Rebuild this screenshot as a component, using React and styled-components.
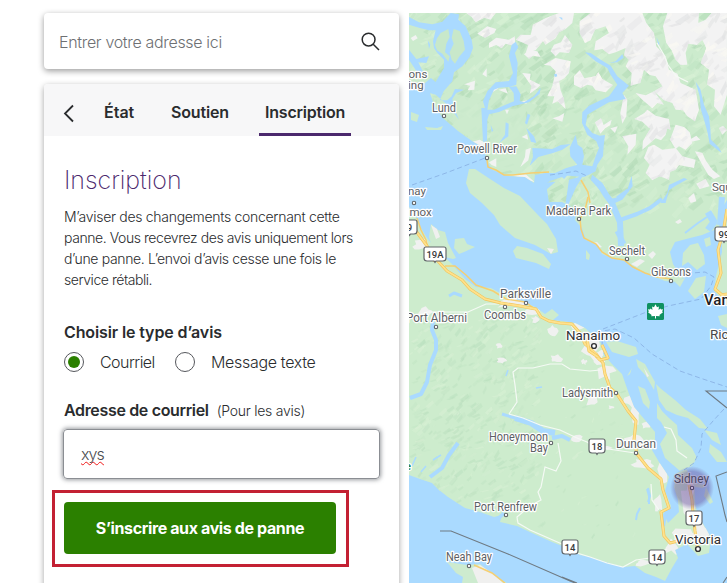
import styled, { createGlobalStyle } from "styled-components";

const GlobalStyle = createGlobalStyle`
  * {
    box-sizing: border-box;
  }
  body {
    margin: 0;
    overflow: hidden;
    background-color: white;
    font-family: Inter, "Liberation Sans", sans-serif;
    color: #2a2c2e;
  }
`;

const Page = styled.div`
  height: 583px;
  padding: 13px 0 0 44px;
  display: flex;
  gap: 10px;
  overflow: hidden;
`;

const Sidebar = styled.div`
  width: 355px;
  flex-shrink: 0;
  display: flex;
  flex-direction: column;
  gap: 15px;
`;

const SearchBox = styled.div`
  height: 56px;
  flex-shrink: 0;
  padding: 0 19px 0 15px;
  display: flex;
  align-items: center;
  justify-content: space-between;
  border-radius: 4px;
  background-color: white;
  box-shadow: 0 2px 6px rgba(0, 0, 0, 0.4);
`;

const Placeholder = styled.span`
  font-size: 16px;
  font-weight: 300;
  line-height: 20px;
  letter-spacing: -0.33px;
  padding-top: 2px;
  color: #6e7073;
`;

const Panel = styled.div`
  height: 530px;
  flex-shrink: 0;
  border-radius: 4px;
  background-color: white;
  box-shadow: 0 2px 6px rgba(0, 0, 0, 0.36);
`;

const Tabs = styled.div`
  height: 52px;
  padding-left: 19px;
  display: flex;
  background-color: #f7f7f8;
  border-radius: 4px 4px 0 0;
`;

const Back = styled.div`
  width: 35px;
  padding-top: 20px;
`;

const Tab = styled.div`
  width: ${(props) => props.$width}px;
  margin-right: ${(props) => props.$gap || 0}px;
  padding: 18px 0 0 6px;
  font-size: 16px;
  font-weight: 600;
  line-height: 20px;
  letter-spacing: ${(props) => props.$spacing}px;
  white-space: nowrap;
  border-bottom: 3px solid ${(props) => (props.$active ? "#4b286d" : "transparent")};
`;

const Body = styled.div`
  padding: 28px 19px 0 20px;
`;

const Title = styled.h1`
  margin: 0;
  font-size: 25px;
  font-weight: 250;
  line-height: 32px;
  letter-spacing: -0.05px;
  color: #4b286d;
`;

const Intro = styled.p`
  margin: 10px 0 0;
  font-size: 14px;
  font-weight: 300;
  line-height: 21px;
  white-space: nowrap;
`;

const Line = styled.span`
  display: block;
  letter-spacing: ${(props) => props.$spacing}px;
`;

const Label = styled.div`
  margin-top: ${(props) => props.$top}px;
  display: flex;
  align-items: baseline;
  gap: 8px;
  font-size: 16px;
  font-weight: 600;
  line-height: 24px;
  letter-spacing: ${(props) => props.$spacing}px;
  white-space: nowrap;
`;

const Hint = styled.span`
  font-size: 14px;
  font-weight: 300;
  letter-spacing: -0.26px;
`;

const Radios = styled.div`
  margin-top: 6px;
  height: 24px;
  display: flex;
  align-items: center;
`;

const Radio = styled.div`
  width: 20px;
  height: 20px;
  margin-right: 16px;
  display: flex;
  align-items: center;
  justify-content: center;
  border: 1px solid #55575c;
  border-radius: 50%;
`;

const Dot = styled.div`
  width: 12px;
  height: 12px;
  border-radius: 50%;
  background-color: #2b8000;
`;

const Option = styled.span`
  width: ${(props) => props.$width}px;
  font-size: 16px;
  font-weight: 300;
  letter-spacing: ${(props) => props.$spacing}px;
  white-space: nowrap;
`;

const Field = styled.div`
  height: 50px;
  margin: 6px 0 0 -1px;
  padding: 0 17px;
  display: flex;
  align-items: center;
  border: 1px solid #8b8e93;
  border-radius: 4px;
  box-shadow: 0 0 4px 1px rgba(84, 89, 95, 0.6);
`;

const Typed = styled.span`
  font-size: 16px;
  font-weight: 300;
  line-height: 20px;
  letter-spacing: -0.9px;
  color: #4b4d50;
  text-decoration: underline wavy #f01818 1px;
  text-underline-offset: 1px;
  text-decoration-skip-ink: none;
`;

const Highlight = styled.div`
  width: 297px;
  margin: 11px 0 0 -12px;
  padding: 9px 10px 10px 9px;
  border: 3px solid #c32033;
`;

const Button = styled.button`
  display: block;
  width: 272px;
  height: 52px;
  padding: 0;
  border: none;
  border-radius: 4px;
  background-color: #2b8000;
  color: white;
  font-family: inherit;
  font-size: 16px;
  font-weight: 700;
  letter-spacing: -0.38px;
  white-space: nowrap;
`;

const MapFrame = styled.div`
  width: 318px;
  height: 570px;
  flex-shrink: 0;
  overflow: hidden;
  svg {
    display: block;
  }
  text {
    font-family: Roboto, "Liberation Sans", sans-serif;
  }
`;

const MAINLAND =
  "M409 13H727V200L722 208 719 228 702 235 690 238 675 242 670 252 673 264 678 272 684 277 678 282 665 281 650 275 640 270 634 267 627 261 615 259 602 254 598 245 586 240 582 228 575 220 577 212 570 206 562 202 549 202 546 184 550 181 565 176 558 173 545 173 535 175 534 183 525 177 508 176 493 170 487 162 484 148 472 141 458 131 443 118 434 105 430 93 438 93 438 84 431 78 425 83 415 86 409 80Z";

const ISLAND =
  "M409 207L415 215 419 225 427 238 438 251 452 264 465 279 476 287 491 288 502 294 518 300 535 307 545 314 552 309 559 315 553 320 562 321 575 323 585 328 592 334 604 346 603 354 612 364 622 374 629 394 634 407 645 420 655 432 655 440 652 450 659 462 669 477 665 491 671 506 665 516 668 523 679 512 678 500 674 487 677 473 686 469 694 480 695 502 697 513 705 527 711 538 709 553 698 556 687 544 675 550 678 558 672 568 665 581 656 577 645 573 635 566 624 567 612 564 590 557 580 555 570 549 552 542 532 533 517 526 500 522 502 515 494 517 480 512 465 508 448 497 439 490 432 483 420 479 409 475Z";

const ISLES = [
  "M469 169L475 169 487 177 504 188 520 196 538 215 547 224 556 239 558 252 551 254 535 245 515 238 500 225 494 215 482 203 470 193 466 183Z",
  "M517 246L527 248 543 254 551 264 549 269 536 263 516 258 513 251Z",
  "M431 224L438 230 445 232 448 243 456 258 453 259 441 256 432 247 429 237Z",
  "M455 239L464 238 467 244 475 247 464 252 459 254 454 248Z",
  "M411 112L419 115 417 122 411 120Z",
  "M425 127L437 128 443 126 441 130 427 130Z",
  "M683 253L690 245 698 243 704 255 705 264 697 270 688 262 682 266Z",
  "M688 291L696 278 706 276 704 292 695 299Z",
  "M704 239L710 237 711 245 706 247Z",
  "M675 282L685 278 680 287Z",
  "M586 250L590 255 589 260 586 259Z",
  "M727 220L722 233 722 252 716 276 714 291 720 297 727 298Z",
  "M718 316L727 314V328L721 325Z",
  "M606 342L617 341 636 347 638 354 629 357 612 352Z",
  "M636 359L645 364 655 382 654 390 646 376 638 367Z",
  "M638 386L645 389 650 402 649 409 643 403Z",
  "M657 403L662 411 669 418 677 425 678 435 692 448 697 458 692 466 680 471 665 458 660 444 667 433 661 422 657 418Z",
  "M656 384L660 388 675 400 686 410 700 419 708 429 699 428 688 418 677 415 666 410 659 400Z",
  "M704 430L717 433 721 445 712 440Z",
  "M710 444L721 452 727 462 717 462 709 452Z",
  "M706 487L713 502 710 504 704 496Z",
  "M693 483L706 485 703 488 695 487Z",
  "M447 562L467 565 480 564 495 577 507 583H462L463 577 456 573Z",
  "M632 368L630 374 627 376Z",
];

// sounds, inlets and lakes of the northern half, on a grid three times as fine
const NORTH_WATER = [
  "M0 12L30 28 70 34 100 26 125 0 150 4 148 20 170 40 188 80 192 105 182 132 160 160 135 178 130 205 104 235 92 262 115 262 128 250 138 228 165 230 142 240 130 258 135 285 150 320 120 280 80 245 62 240 75 215 90 190 105 165 105 140 85 120 75 105 72 85 80 52 60 52 30 44 0 35Z",
  "M0 110L22 138 60 130 52 150 28 148 45 182 22 174 0 140Z",
  "M56 82L64 95 60 108Z",
  "M308 96L320 86 328 102 318 120 326 150 322 215 300 222 270 224 255 230 240 262 235 290 255 290 290 275 315 265 314 240 300 222 322 220 335 244 332 264 345 268 375 250 395 225 392 242 360 268 310 280 270 297 240 304 235 320 234 384 222 386 217 285 228 285 222 265 235 235 260 208 300 204 312 180 300 130Z",
  "M290 328L299 332 298 370 270 390 288 365Z",
  "M245 335l8 18-5 4z",
  "M356 302L364 306 354 335 348 330Z M352 345L375 370 382 390 366 386Z",
  "M370 405L430 408 455 396 485 393 460 410 432 420 418 424 388 432 362 458 372 432Z",
  "M528 118L545 120 575 140 605 158 625 190 660 218 640 240 650 258 600 268 560 290 535 305 530 336 550 360 572 368 588 366 584 400 582 430 565 455 560 475 540 485 525 492 480 488 425 486 470 466 505 455 484 430 482 404 500 366 506 395 520 405 525 430 520 455 550 460 560 430 570 405 562 385 535 365 519 330 520 298 540 278 600 250 625 215 605 185 595 165 560 145Z",
  "M600 150L620 145 640 124 644 134 625 148Z",
  "M550 485L580 510 605 558 630 552 656 528 668 488 671 520 640 560 618 570H598L580 540 545 500Z",
  "M780 516L825 495 835 499 800 518 780 532 770 570H755L775 540Z",
  "M742 72L752 94 748 96Z",
  "M860 206L874 228 885 275 900 310 904 345 906 380 930 404 938 420 902 392 896 360 888 330 876 290 872 250Z",
  "M435 184l8-2 2 8-7 2z M450 12l10 2 0 8z",
  "M480 500L520 490 495 530 478 570H470Z",
  "M400 510L440 506 412 530 400 525Z",
];

const NORTH_ISLES = [
  "M95 60L118 48 122 72 112 92 108 118 122 130 118 146 100 122 84 112 78 96 84 76Z",
  "M134 48L152 54 164 84 168 110 150 132 138 152 128 140 122 118 134 92 128 74Z",
  "M530 404L545 410 538 424 526 416Z",
];

const SNOW = [
  "M172 0L260 0 245 20 226 14 200 28 188 12Z",
  "M205 62L235 40 262 48 256 60 228 74Z",
  "M240 90L262 74 300 80 318 70 318 100 290 92 278 106 262 96 240 104Z",
  "M320 80L335 65 365 66 372 35 410 15 450 0 495 0 490 30 470 48 450 58 440 76 410 95 402 84 380 112 350 120 358 96Z",
  "M435 95L456 88 468 66 490 95 480 120 452 118 440 130 425 115Z",
  "M345 124L360 112 385 115 395 132 372 128 360 137Z",
  "M405 155L440 135 485 145 480 180 466 196 450 205 455 232 464 256 470 288 446 265 430 272 436 250 415 250 430 220 440 175 424 158Z",
  "M340 180L365 182 362 200 395 216 382 228 362 242 368 220Z",
  "M495 190L512 172 526 196 560 190 568 178 580 198 612 216 590 238 560 232 550 218 535 215 515 225 495 215Z",
  "M512 25L545 0 700 0 712 30 735 60 742 100 770 130 780 170 805 182 815 210 860 230 870 290 858 325 835 310 822 292 800 290 790 270 765 262 735 235 760 220 740 190 722 186 705 170 694 210 665 218 668 180 650 160 660 140 645 126 650 105 620 118 600 124 580 108 556 112 560 85 600 60 590 40 558 50 545 82 528 90 512 60Z",
  "M775 0L870 0 868 30 890 20 908 0 954 0 954 245 935 305 915 280 918 230 895 215 900 170 875 150 892 106 880 80 864 96 838 92 830 120 835 155 815 156 800 140 788 112 772 90 762 40Z",
  "M680 240L710 247 735 235 765 275 745 270 730 286 700 260Z",
  "M676 318L706 300 715 290 740 308 780 318 785 350 752 338 742 352 720 345 700 326Z",
  "M716 360L735 330 775 345 770 366 756 382 740 376 700 410 702 384Z",
  "M783 380L800 335 825 342 842 358 850 390 830 410 810 400 800 408Z",
  "M705 435L718 402 735 395 760 410 800 405 820 430 860 440 855 465 810 456 800 470 784 476 780 500 752 490 730 502 710 480 722 455Z",
  "M640 370L682 362 680 395 655 425 658 400Z",
  "M558 328L576 316 584 336 608 320 604 336 588 346 574 362Z",
  "M645 245L655 260 652 310 640 332 634 300Z",
  "M858 415L880 420 890 442 910 470 934 490 915 498 898 486 880 455Z",
  "M862 512L890 498 902 520 872 528Z",
  "M838 555L855 540 862 565 845 570Z",
  "M930 345L942 338 954 352 940 365Z",
  "M832 386L862 368 874 380 848 386Z",
  "M704 38L714 32 718 50Z",
  "M450 310L466 300 460 326 430 316Z",
];

const NORTH_TOWNS = [
  "M165 214L198 203 196 230 176 232 184 218Z", "M220 184L233 166 233 192Z", "M268 230L290 226 297 242Z",
  "M190 386L212 380 234 392 218 400Z", "M240 448L262 436 262 462 248 456Z", "M338 372L354 364 358 380Z",
  "M366 404L358 442 334 462 348 432 350 410Z", "M300 486L350 484 378 508 336 494Z", "M288 290L300 290 294 304Z",
  "M248 224L280 205 266 228 250 238Z", "M5 75L20 66 26 76 12 84Z", "M6 260L18 268 16 276Z",
  "M336 266L356 262 352 272Z", "M604 346L626 340 618 360Z", "M178 466L198 470 198 484 176 480Z",
];

// inlets and lakes drawn as strokes: [path, width]
const INLETS = [
  ["M563 178L570 170M567 204L575 186 581 176", 3],
  ["M600 185L606 195 612 203 620 222 621 246", 6],
  ["M617 198L628 190", 3],
  ["M620 220L637 214 650 208 662 199", 4],
  ["M624 244L617 231", 5],
  ["M708 212L714 222 708 230", 7],
  ["M722 197L720 225", 6],
  ["M685 233L698 223 707 217", 2],
  ["M433 322L432 330 436 340 436 350 430 365 427 382 421 394 410 398", 4],
  ["M449 296L454 293 462 296", 3],
  ["M458 443L449 455 442 468 430 477", 4],
  ["M416 457L412 466M421 472L426 466M433 460L441 455", 1.5],
  ["M502 414L515 418", 3],
  ["M515 418L531 423 543 431 555 433", 6],
  ["M552 438L562 436 570 440", 4],
  ["M497 520L504 513", 3.5],
  ["M648 488L650 496 648 502", 2],
  ["M640 508L637 514 636 520", 2],
  ["M647 489L649 496 649 504", 2],
  ["M670 507L665 515 663 526", 4],
  ["M506 376L508 370M536 388L542 387", 1.5],
];

// built-up ground along the coast and the highways: [x, y, rx, ry]
const TOWNS = [
  [414, 208, 6, 9], [420, 245, 8, 6], [436, 254, 9, 5], [427, 312, 8, 5], [512, 303, 19, 5],
  [533, 312, 10, 4], [553, 331, 5, 6], [536, 319, 5, 4], [501, 361, 5, 3], [555, 359, 7, 5],
  [591, 346, 9, 16], [606, 371, 9, 9], [598, 357, 8, 8], [578, 325, 7, 4], [636, 440, 12, 6],
  [643, 463, 11, 5], [662, 473, 5, 14], [658, 504, 5, 11], [689, 497, 7, 18], [699, 533, 12, 19],
  [686, 535, 15, 8], [672, 546, 8, 8], [592, 398, 7, 8], [636, 415, 5, 9], [577, 439, 6, 4],
  [642, 563, 8, 3], [499, 346, 3, 3], [483, 577, 13, 8], [611, 407, 3, 2], [630, 400, 6, 8],
  [604, 448, 8, 2], [646, 425, 5, 5], [584, 362, 3, 3],
];

const HIGHWAYS = [
  "M416 231L427 246 435 258 447 271 462 280 470 289 485 299 501 303 520 306 536 309 541 317 549 321 560 323 572 324 580 333 585 344 596 354 603 363 605 374 610 388 617 394 628 411 636 421 634 440 637 454 648 468 661 479 663 490 669 508 661 512 664 536 670 543 682 540",
  "M689 485L692 500 693 514 695 531 698 552",
  "M602 345L608 358 600 360 596 356",
  "M727 209L723 233 718 250 721 273 715 289 722 295 727 294",
  "M587 338L589 351 598 357",
];

const THIN_ROADS = [
  "M417 218L421 230 426 240 429 252 434 262M445 266L455 266 466 275 476 285 493 291 506 299 525 302 535 309",
  "M487 160L488 167 496 170 504 175 513 175 531 173 549 172",
  "M581 180L588 192 590 203",
  "M588 197L585 210 580 219 581 229 584 238 596 244 602 252 612 258 624 260 633 267 645 273 657 277 671 279",
  "M474 565L492 573 505 583",
];

const WHITE_ROADS = [
  "M409 319L427 312 448 312 468 312 486 304 499 304",
  "M509 414L517 402 515 385 513 372 518 368 533 368 550 364 562 364 570 369 590 371 600 370",
  "M509 414L523 418 540 425 560 430 577 438",
  "M558 443L561 461 556 471 545 467 541 487 538 492 541 500 530 506 517 517 518 523 530 530 562 544",
  "M577 438L587 442 595 447 615 450 635 453",
  "M577 553L590 557 607 563 623 567 636 560 650 558 667 549",
  "M657 43L664 55 668 65 676 76 688 82",
  "M664 427L671 429 676 440 677 451 687 458",
  "M651 484L652 500 659 510",
];

const FERRIES = [
  "M412 185L446 173 485 158",
  "M550 175L565 173 576 171 587 176",
  "M603 329L644 313 668 306 701 299 711 286 714 277 705 272 692 273",
  "M602 345L603 331 615 329 634 338 652 354 680 371 700 378 727 387",
  "M724 409L713 421 702 434 701 448 694 463 684 470",
];

// [x, y, width, text, size, colour]
const PLACES = [
  [432, 112, 24, "Lund"], [457, 153, 60, "Powell River"], [546, 215, 65, "Madeira Park"],
  [609, 255, 36, "Sechelt"], [651, 276, 40, "Gibsons"], [500, 298, 51, "Parksville"],
  [484, 319, 42, "Coombs"], [406, 322, 61, "Port Alberni"], [562, 397, 51, "Ladysmith"],
  [489, 441, 59, "Honeymoon"], [530, 452, 18, "Bay"], [616, 448, 40, "Duncan"],
  [474, 511, 63, "Port Renfrew"], [446, 561, 46, "Neah Bay"],
  [566, 340, 54, "Nanaimo", 13.5, "#303134"], [675, 544, 46, "Victoria", 13.5, "#303134"],
];

// names that run off the edge of the map: [x, y, text, size, colour, weight]
const EDGE_PLACES = [
  [408.5, 78, "ons", 11.5], [408, 89, "ing", 11.5], [408, 195, "nay", 11.5], [409.5, 216, "mox", 11.5],
  [712, 191, "Squ", 11.5], [710, 339, "Ric", 13.5, "#45484c"], [704, 305, "Van", 15, "#202124", 500],
];

const STOPS = [
  [444, 116], [487, 158], [414, 203], [579, 219], [627, 259], [671, 281], [526, 303],
  [505, 307], [436, 327], [616, 393], [551, 443], [636, 453], [506, 515], [469, 566],
];

const SHIELDS = [
  [424, 247, 22, "19A"], [589, 439, 16, "18"], [686, 511, 16, "17"], [562, 540, 16, "14"],
  [649, 550, 16, "14"], [402, 220, 15, "9"], [715, 227, 18, "99"],
];

let seed = 7;
const random = () => {
  seed = (seed * 16807) % 2147483647;
  return seed / 2147483647;
};

const blob = ([x, y, rx, ry], points = 11) => {
  const result = [];
  for (let i = 0; i < points; i++) {
    const angle = (i / points) * Math.PI * 2;
    const r = 0.45 + random() * 0.8;
    result.push(`${(x + Math.cos(angle) * rx * r).toFixed(1)},${(y + Math.sin(angle) * ry * r).toFixed(1)}`);
  }
  return result.join(" ");
};

const makeSlopes = ({ count, left = 409, right = 727, top, bottom, size }) =>
  Array.from({ length: count }, () => {
    const x = left + random() * (right - left);
    const y = top + random() * (bottom - top);
    const w = size * (0.5 + random());
    const h = size * (0.3 + random());
    return {
      points: `${x},${y} ${x + w},${y - h} ${x + w * 1.2},${y - h * 0.5} ${x + w * 0.4},${y + h * 0.35}`,
      dark: random() > 0.42,
      opacity: 0.15 + random() * 0.4,
    };
  });

const townShapes = TOWNS.map((item) => blob(item));
const northSlopes = makeSlopes({ count: 800, top: 13, bottom: 215, size: 9 });
const southSlopes = [
  ...makeSlopes({ count: 420, right: 535, top: 320, bottom: 500, size: 6 }),
  ...makeSlopes({ count: 110, right: 640, top: 330, bottom: 540, size: 4 }),
];
const snowSlopes = makeSlopes({ count: 650, top: 13, bottom: 200, size: 9 });

const CoastMap = () => (
  <svg width="318" height="570" viewBox="409 13 318 570">
    <defs>
      <clipPath id="mainland"><path d={MAINLAND} /></clipPath>
      <clipPath id="island"><path d={ISLAND} /></clipPath>
      <clipPath id="snow">
        <path d={SNOW.join(" ")} transform="translate(409 13) scale(0.3333)" />
      </clipPath>
      <radialGradient id="outage">
        <stop offset="0" stopColor="#6a4a96" stopOpacity="0.52" />
        <stop offset="0.75" stopColor="#66509d" stopOpacity="0.46" />
        <stop offset="1" stopColor="#66579d" stopOpacity="0" />
      </radialGradient>
    </defs>
    <rect x="409" y="13" width="318" height="570" fill="#aadaff" />
    <path d={MAINLAND} fill="#ccebcd" />
    <path d={ISLAND} fill="#cdeccd" />
    <g clipPath="url(#mainland)">
      {northSlopes.map((s, i) => (
        <polygon key={i} points={s.points} fill={s.dark ? "#b0d9b5" : "#dcf3d8"} opacity={s.opacity} />
      ))}
      <path d="M448 92L485 102 484 148 462 132 440 112 436 98ZM493 110L525 108 529 145 522 172 497 168 489 150Z" fill="#cdebce" opacity="0.8" />
      <g transform="translate(409 13) scale(0.3333)">
        {SNOW.map((d, i) => <path key={i} d={d} fill="#f3f3f3" />)}
        {NORTH_TOWNS.map((d, i) => <path key={i} d={d} fill="#f2f3f2" />)}
      </g>
      <g clipPath="url(#snow)">
        {snowSlopes.map((s, i) => (
          <polygon key={i} points={s.points} fill={s.dark ? "#e1e2e3" : "#faf9f3"} opacity={s.opacity + 0.15} />
        ))}
      </g>
      <path d="M648 255l5-4 3 3-4 5zM631 264l9-5 5 2-8 6zM675 222l5-3 2 3-4 2zM588 244l9-2 5 5-8 2z" fill="#f0f1f0" />
    </g>
    <g clipPath="url(#island)">
      {southSlopes.map((s, i) => (
        <polygon key={i} points={s.points} fill={s.dark ? "#b9dfbe" : "#daf1d6"} opacity={s.opacity} />
      ))}
      {townShapes.map((points, i) => <polygon key={i} points={points} fill="#f0f1f0" />)}
    </g>
    <g transform="translate(409 13) scale(0.3333)">
      {NORTH_WATER.map((d, i) => <path key={i} d={d} fill="#aadaff" />)}
      {NORTH_ISLES.map((d, i) => <path key={i} d={d} fill="#c8e8ca" />)}
    </g>
    {INLETS.map(([d, width], i) => (
      <path key={i} d={d} fill="none" stroke="#aadaff" strokeWidth={width} strokeLinejoin="bevel" />
    ))}
    {ISLES.map((d, i) => <path key={i} d={d} fill="#cdebcf" />)}
    <path d="M472 568l8-3 12 8 11 10H478zM431 225l6 4 3 8-4 2zM554 249l-7-1 4 6zM644 368l5 8-2 1z" fill="#f0f0ef" />
    {FERRIES.map((d, i) => (
      <path key={i} d={d} fill="none" stroke="#8eb7e8" strokeDasharray="5 3" />
    ))}
    {WHITE_ROADS.map((d, i) => <path key={i} d={d} fill="none" stroke="#f5faf5" strokeWidth="1.2" />)}
    {THIN_ROADS.map((d, i) => <path key={i} d={d} fill="none" stroke="#f5cf72" strokeWidth="1.5" />)}
    {HIGHWAYS.map((d, i) => (
      <g key={i} fill="none" strokeLinejoin="round">
        <path d={d} stroke="#f1c55c" strokeWidth="3" />
        <path d={d} stroke="#ffe18c" strokeWidth="1.8" />
      </g>
    ))}
    <path
      d="M440 531H451L508 554 570 581 575 583M562 577L577 583M727 391H706L727 408M727 472L716 476 725 515 727 522M727 577L723 583"
      fill="none"
      stroke="#6f7a83"
      strokeWidth="1.1"
    />
    {STOPS.map(([x, y], i) => (
      <circle key={i} cx={x} cy={y} r="1.7" fill="white" stroke="#606468" strokeWidth="1.1" />
    ))}
    <circle cx="594" cy="346" r="2.4" fill="white" stroke="#303134" strokeWidth="1.4" />
    <circle cx="698" cy="549" r="2.4" fill="white" stroke="#303134" strokeWidth="1.4" />
    {SHIELDS.map(([x, y, width, label], i) => (
      <g key={i}>
        <path
          d={`M${x + 2} ${y}h${width - 4}q2 0 2 2v9q0 3-3 3h-${(width - 8) / 2}l-1 1.5-1-1.5h-${(width - 8) / 2}q-3 0-3-3v-9q0-2 2-2z`}
          fill="white"
          stroke="#63676b"
          strokeWidth="1.2"
        />
        <text x={x + width / 2} y={y + 11} textAnchor="middle" fontSize="9.5" fontWeight="500" fill="#37393b">
          {label}
        </text>
      </g>
    ))}
    <g transform="translate(647 303)">
      <rect width="17" height="17" rx="1.5" fill="#0f9160" />
      <path
        d="M8.5 1.3L10 4.3 11.9 3.4 11.6 7 13.4 5.4 14 6.6 16 6.3 15.2 8.6 16 9.3 12.4 12 12.8 13.3 9 12.9V15.6H8V12.9L4.2 13.3 4.6 12 1 9.3 1.8 8.6 1 6.3 3 6.6 3.6 5.4 5.4 7 5.1 3.4 7 4.3Z"
        fill="white"
      />
    </g>
    <g stroke="white" strokeWidth="2.5" strokeLinejoin="round" paintOrder="stroke">
      {PLACES.map(([x, y, width, name, size, color]) => (
        <text
          key={name}
          x={x}
          y={y}
          fontSize={size || 12}
          textLength={width}
          lengthAdjust="spacingAndGlyphs"
          fill={color || "#5c6064"}
        >
          {name}
        </text>
      ))}
      {EDGE_PLACES.map(([x, y, name, size, color, weight]) => (
        <text key={name} x={x} y={y} fontSize={size} fill={color || "#5c6064"} fontWeight={weight || 400}>
          {name}
        </text>
      ))}
      <text x="405" y="470" fontSize="11" fontWeight="700" fill="#16804a">e</text>
    </g>
    <circle cx="692" cy="488" r="22" fill="url(#outage)" />
    <circle cx="692" cy="488" r="1.7" fill="#cbb6d5" stroke="#4d4369" strokeWidth="1.1" />
    <text
      x="674"
      y="483"
      fontSize="12"
      textLength="35"
      lengthAdjust="spacingAndGlyphs"
      fill="#4d4763"
      stroke="#d8c6df"
      strokeOpacity="0.4"
      strokeWidth="2"
      paintOrder="stroke"
    >
      Sidney
    </text>
  </svg>
);

const App = () => {
  return (
    <>
      <GlobalStyle />
      <Page>
        <Sidebar>
          <SearchBox>
            <Placeholder>Entrer votre adresse ici</Placeholder>
            <svg width="19" height="19" viewBox="0 0 19 19" fill="none" stroke="#2a2c2e" strokeWidth="1.5">
              <circle cx="7.6" cy="7.6" r="6.4" />
              <path d="M12.2 12.2L18 18" />
            </svg>
          </SearchBox>
          <Panel>
            <Tabs>
              <Back>
                <svg width="12" height="19" viewBox="0 0 12 19" fill="none" stroke="#2a2c2e" strokeWidth="1.8">
                  <path d="M10 1.5L2 9.5L10 17.5" />
                </svg>
              </Back>
              <Tab $width={42} $gap={25} $spacing={0}>État</Tab>
              <Tab $width={70} $gap={24} $spacing={-0.15}>Soutien</Tab>
              <Tab $width={92} $spacing={-0.2} $active>Inscription</Tab>
            </Tabs>
            <Body>
              <Title>Inscription</Title>
              <Intro>
                <Line $spacing={-0.3}>M’aviser des changements concernant cette</Line>
                <Line $spacing={-0.43}>panne. Vous recevrez des avis uniquement lors</Line>
                <Line $spacing={-0.35}>d’une panne. L’envoi d’avis cesse une fois le</Line>
                <Line $spacing={-0.45}>service rétabli.</Line>
              </Intro>
              <Label $top={30} $spacing={-0.12}>Choisir le type d’avis</Label>
              <Radios>
                <Radio><Dot /></Radio>
                <Option $width={75} $spacing={-0.55}>Courriel</Option>
                <Radio />
                <Option $width={110} $spacing={-0.32}>Message texte</Option>
              </Radios>
              <Label $top={24} $spacing={-0.34}>
                Adresse de courriel <Hint>(Pour les avis)</Hint>
              </Label>
              <Field>
                <Typed>xys</Typed>
              </Field>
              <Highlight>
                <Button>S’inscrire aux avis de panne</Button>
              </Highlight>
            </Body>
          </Panel>
        </Sidebar>
        <MapFrame>
          <CoastMap />
        </MapFrame>
      </Page>
    </>
  );
};

export default App;
